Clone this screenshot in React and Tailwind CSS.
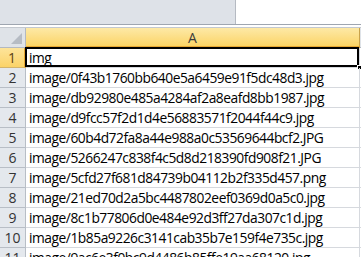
import React from "react";

const rows = [
  "img",
  "image/0f43b1760bb640e5a6459e91f5dc48d3.jpg",
  "image/db92980e485a4284af2a8eafd8bb1987.jpg",
  "image/d9fcc57f2d1d4e56883571f2044f44c9.jpg",
  "image/60b4d72fa8a44e988a0c53569644bcf2.JPG",
  "image/5266247c838f4c5d8d218390fd908f21.JPG",
  "image/5cfd27f681d84739b04112b2f335d457.png",
  "image/21ed70d2a5bc4487802eef0369d0a5c0.jpg",
  "image/8c1b77806d0e484e92d3ff27da307c1d.jpg",
  "image/1b85a9226c3141cab35b7e159f4e735c.jpg",
  "image/9ac6e3f0bc9d4486b85ffe19aa68120.jpg",
];

const font = { fontFamily: "'Open Sans', 'Noto Sans', sans-serif" };

export default function App() {
  return (
    <div className="w-[361px] h-[257px] overflow-hidden bg-white" style={font}>
      {/* formula bar strip */}
      <div className="flex h-[24px]">
        <div className="w-[236px] bg-[#dee2e8] border-r border-[#b5bac2]" />
        <div className="flex-1 bg-white" />
      </div>
      <div className="h-[1px] bg-[#9fa6b0]" />
      <div className="h-[2px] bg-white" />
      <div className="h-[1px] bg-[#c3c8cf]" />

      {/* column header */}
      <div className="flex h-[20px]">
        <div className="relative w-[26px] bg-[#dfe3e8] border-r border-b border-[#b3b9c1]">
          <div className="absolute right-[3px] bottom-[3px] w-0 h-0 border-l-[11px] border-l-transparent border-b-[11px] border-b-[#b6bcc4]" />
        </div>
        <div className="w-[334px] flex items-center justify-center bg-gradient-to-b from-[#fde9a6] to-[#fbd464] border-r border-[#c9a24a] border-b-2 border-b-[#e7a832] text-[14px] text-[#3b3b3b]">
          A
        </div>
        <div className="flex-1 bg-[#dfe3e8] border-b border-[#b3b9c1]" />
      </div>

      {/* rows */}
      {rows.map((text, i) => {
        const selected = i === 0;
        return (
          <div key={i} className="flex h-[20px]">
            <div
              className={
                selected
                  ? "w-[26px] h-full flex items-center justify-center bg-gradient-to-b from-[#fde49a] to-[#fbd367] border-r-2 border-r-[#e7a832] border-b border-[#d2b46c] text-[14px] text-[#5a4216]"
                  : "w-[26px] h-full flex items-center justify-center bg-[#e4e8ed] border-r border-b border-[#b8bec6] text-[14px] text-[#333]"
              }
            >
              {i + 1}
            </div>
            <div className="relative w-[334px] h-full border-r border-b border-[#d6d9de] pl-[3px] flex items-end">
              <span className="text-[13.8px] leading-[19px] text-black whitespace-nowrap tracking-[-0.47px]">
                {text}
              </span>
              {selected && (
                <>
                  <div className="absolute left-[-1px] top-[-1px] right-[0px] bottom-[0px] border-2 border-black" />
                  <div className="absolute right-[-3px] bottom-[-3px] w-[5px] h-[5px] bg-black border border-white" />
                </>
              )}
            </div>
            <div className="flex-1 border-b border-[#d6d9de]" />
          </div>
        );
      })}
    </div>
  );
}
